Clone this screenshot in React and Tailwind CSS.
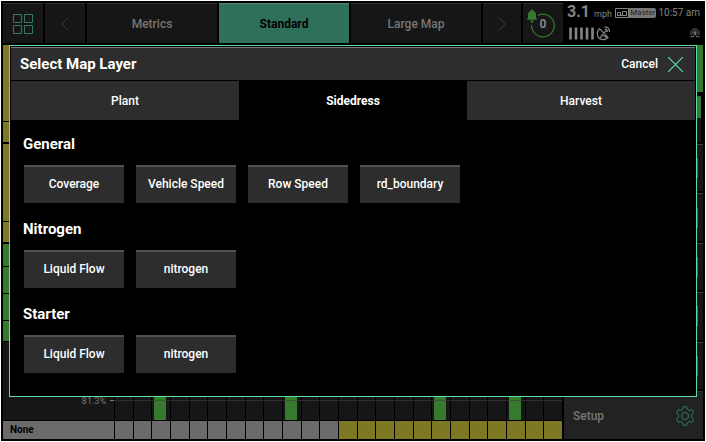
import React, { useState } from "react";

const layers = {
  Plant: [
    { title: "General", items: ["Coverage", "Vehicle Speed", "Row Speed"] },
  ],
  Sidedress: [
    {
      title: "General",
      items: ["Coverage", "Vehicle Speed", "Row Speed", "rd_boundary"],
    },
    { title: "Nitrogen", items: ["Liquid Flow", "nitrogen"] },
    { title: "Starter", items: ["Liquid Flow", "nitrogen"] },
  ],
  Harvest: [
    { title: "General", items: ["Coverage", "Vehicle Speed", "rd_boundary"] },
  ],
};

// Segments of the map edge, top to bottom
const segments = [
  { color: "bg-[#7d7824]", span: 76 },
  { color: "bg-[#7d7824]", span: 20, last: true },
  { color: "bg-[#7d7824]", span: 76 },
  { color: "bg-[#7d7824]", span: 20, last: true },
  { color: "bg-[#36792f]", span: 22 },
  { color: "bg-[#36792f]", span: 26 },
  { color: "bg-[#36792f]", span: 26 },
  { color: "bg-[#36792f]", span: 20, last: true },
];

const rows = Array.from({ length: 24 }, (_, i) => i);
const activeRows = [2, 9, 17, 21];

const navButton =
  "flex h-10 items-center justify-center border-t border-[#303030] bg-[#161616]";

const GridIcon = () => (
  <svg width="20" height="20" viewBox="0 0 20 20" fill="none" stroke="#2f7c62" aria-hidden="true">
    <path d="M.5.5h8v8h-8zM11.5.5h8v8h-8zM.5 11.5h8v8h-8zM11.5 11.5h8v8h-8z" />
  </svg>
);

const BellIcon = () => (
  <svg width="32" height="30" viewBox="0 0 32 30" aria-hidden="true">
    <path
      d="M11 6.4A11.3 11.3 0 1 1 4.7 16"
      fill="none"
      stroke="#36792f"
      strokeWidth="1.2"
    />
    <path
      d="M5 .5C5.8.5 6.3 1 6.3 1.8 8.3 2.4 9 4 9 6V8.6L10.3 10.8H0L1 8.6V6C1 4 1.7 2.4 3.7 1.8 3.7 1 4.2.5 5 .5ZM3.2 11.6H6.8C6.6 13 6 13.6 5 13.6S3.4 13 3.2 11.6Z"
      fill="#36792f"
    />
  </svg>
);

const SignalIcon = () => (
  <svg width="42" height="15" viewBox="0 0 42 15" fill="none" stroke="#858585" aria-hidden="true">
    <path d="M1.5 1.5v12M7 1.5v12M12.5 1.5v12M18 1.5v12M23.5 1.5v12" strokeWidth="2.6" />
    <path
      d="M30.5 2.7C27.4 5.6 27.6 10.3 30.4 12.4 33 14.4 36.8 14 39 11.5ZM34.6 7.2 37.2 4.6M31.2 12 33.2 8.6 38 11.8M35.5.9c3.2 0 5 1.8 5 5M35.7 3.2c1.8 0 2.7 1 2.7 2.8"
      strokeWidth="1.2"
    />
  </svg>
);

const ReceiverIcon = () => (
  <svg width="14" height="10" viewBox="0 0 14 10" fill="none" stroke="#858585" className="shrink-0" aria-hidden="true">
    <path d="M.5 .5h13v9H.5zM2.5 7V4.5h3V7M7.5 7V3.5h4V7M2 7.5h10" />
  </svg>
);

const SatelliteIcon = () => (
  <svg width="10" height="10" viewBox="0 0 10 10" fill="none" stroke="#777777" strokeWidth=".9" aria-hidden="true">
    <path d="M1.2 7C0 3.4 2.4.8 5 .8S10 3.4 8.8 7M3 6.2C2.2 4 3.4 2.8 5 2.8S7.8 4 7 6.2M2.2 9.4 5 6.2l2.8 3.2M.3 8.6h3.4M6.3 8.6h3.4" />
    <circle cx="5" cy="5" r="1" fill="#777777" />
  </svg>
);

const GearIcon = () => (
  <svg width="18" height="20" viewBox="0 0 18 20" fill="none" stroke="#2f7c62" strokeLinejoin="round" aria-hidden="true">
    <path d="M6.7 3.3 7.2.7h3.6l.5 2.6 2 1.2 2.6-.9 1.7 3.1-2 1.8v3l2 1.8-1.7 3.1-2.6-.9-2 1.2-.5 2.6H7.2l-.5-2.6-2-1.2-2.6.9-1.7-3.1 2-1.8v-3l-2-1.8 1.7-3.1 2.6.9z" />
    <circle cx="9" cy="10" r="3.6" />
  </svg>
);

const TopBar = () => {
  const [view, setView] = useState("Standard");

  return (
    <header className="flex gap-0.5">
      <button aria-label="Home" className={`${navButton} w-10`}>
        <GridIcon />
      </button>
      <button aria-label="Previous view" className={`${navButton} w-10`}>
        <svg width="8" height="14" viewBox="0 0 8 14" fill="none" stroke="#3c3c3c" aria-hidden="true">
          <path d="M7 .5.8 7 7 13.5" />
        </svg>
      </button>
      {["Metrics", "Standard", "Large Map"].map((name) => (
        <button
          key={name}
          onClick={() => setView(name)}
          className={
            name === view
              ? "h-10 flex-1 border-t border-[#4f8773] bg-[#2f705a] text-xs font-bold text-black"
              : "h-10 flex-1 border-t border-[#303030] bg-[#161616] text-xs font-medium text-[#777777]"
          }
        >
          {name}
        </button>
      ))}
      <button aria-label="Next view" className={`${navButton} w-[38px]`}>
        <svg width="8" height="14" viewBox="0 0 8 14" fill="none" stroke="#3c3c3c" aria-hidden="true">
          <path d="M1 .5 7.2 7 1 13.5" />
        </svg>
      </button>
      <button aria-label="Alerts" className={`${navButton} relative w-10`}>
        <BellIcon />
        <span className="absolute inset-0 flex items-center justify-center text-xs font-bold text-[#858585]">
          0
        </span>
      </button>
      <div className="flex w-[138px] flex-col justify-between pt-0.5 pr-[3px] pl-0.5 whitespace-nowrap text-[#858585]">
        <div className="flex h-4 items-center justify-between">
          <span className="flex items-baseline gap-1">
            <b className="text-base leading-4 font-bold">3.1</b>
            <span className="text-[9px] leading-4">mph</span>
          </span>
          <span className="flex items-center">
            <ReceiverIcon />
            <span className="rounded-r-xs bg-[#777777] px-px text-[8px] leading-[10px] text-[#222222]">
              Master
            </span>
            <time className="ml-0.5 text-[10px] leading-4">10:57 am</time>
          </span>
        </div>
        <div className="flex h-5 items-center justify-between pl-0.5">
          <SignalIcon />
          <SatelliteIcon />
        </div>
      </div>
    </header>
  );
};

const RowChart = () => (
  <section aria-label="Row chart">
    <div className="flex h-[78px]">
      <div className="flex w-[111px] items-end justify-end bg-[#161616] pb-[13px] text-[9px] leading-3 text-[#777777]">
        <span className="pr-1">81.3%</span>
        <span className="mb-1.5 h-px w-1 bg-[#777777]" />
      </div>
      <div className="relative grid flex-1 grid-cols-24 gap-x-px pl-px">
        {rows.map((i) => (
          <div key={i} className="bg-[#161616]">
            {activeRows.includes(i) && (
              <div className="ml-0.5 h-full w-3 bg-[#36792f]" />
            )}
          </div>
        ))}
        <div className="absolute inset-x-0 bottom-[19px] h-px bg-[#404040]/60" />
      </div>
    </div>
    <div className="mt-px flex h-[18px]">
      <div className="w-[111px] bg-[#6b6b6b] pl-[7px] text-[10px] leading-[18px] font-bold text-black">
        None
      </div>
      <div className="grid flex-1 grid-cols-24 gap-x-px pl-px">
        {rows.map((i) => (
          <div key={i} className={i < 12 ? "bg-[#6b6b6b]" : "bg-[#7d7824]"} />
        ))}
      </div>
    </div>
  </section>
);

const SidePanel = () => (
  <aside className="flex w-[139px] flex-col gap-0.5">
    <div className="h-[47px] bg-[#36792f]" />
    <div className="mt-0.5 mr-0.5 h-[46px] bg-[#161616]">
      <div className="h-[22px] border-t border-[#505050] bg-[#36792f]" />
    </div>
    {[0, 1, 2, 3, 4].map((i) => (
      <div key={i} className="flex flex-1 items-center border-t border-[#404040] bg-[#161616]">
        <div className="h-5 w-[134px] bg-[#36792f]" />
      </div>
    ))}
    <button className="flex h-12 items-center justify-between border-t border-[#303030] bg-[#222222] px-[9px] text-xs font-medium text-[#777777]">
      Setup
      <GearIcon />
    </button>
  </aside>
);

const SelectMapLayer = () => {
  const [tab, setTab] = useState("Sidedress");

  return (
    <div
      role="dialog"
      aria-labelledby="dialog-title"
      className="absolute inset-x-1.5 top-0 bottom-[42px] border border-[#5fd9ae] bg-black p-px text-white"
    >
      <div className="flex h-[33px] items-center justify-between border-t border-[#777777] bg-[#2d2d2d] pr-3 pl-[9px]">
        <h1 id="dialog-title" className="text-[15px] font-bold">
          Select Map Layer
        </h1>
        <button className="flex items-center gap-2.5 text-xs font-medium">
          Cancel
          <svg width="15" height="15" viewBox="0 0 15 15" stroke="#5fd9ae" strokeWidth="1.2" aria-hidden="true">
            <path d="M0 0 15 15M15 0 0 15" />
          </svg>
        </button>
      </div>
      <div role="tablist" className="mt-px grid grid-cols-3">
        {Object.keys(layers).map((name) => (
          <button
            key={name}
            role="tab"
            aria-selected={name === tab}
            onClick={() => setTab(name)}
            className={
              name === tab
                ? "h-[39px] bg-black text-xs font-bold"
                : "h-[39px] bg-[#2d2d2d] text-xs font-medium"
            }
          >
            {name}
          </button>
        ))}
      </div>
      <div className="px-3 pt-[13px]">
        {layers[tab].map((group) => (
          <section key={group.title} className="mb-[15px]">
            <h2 className="text-[15px] leading-[22px] font-bold">{group.title}</h2>
            <div className="mt-2.5 flex flex-wrap gap-3 pl-px">
              {group.items.map((item) => (
                <button
                  key={item}
                  className="h-[38px] w-[100px] border-t-2 border-[#505050] bg-[#2d2d2d] pb-0.5 text-xs font-medium"
                >
                  {item}
                </button>
              ))}
            </div>
          </section>
        ))}
      </div>
    </div>
  );
};

const App = () => {
  return (
    <div className="flex min-h-screen bg-white p-px font-['Roboto',sans-serif]">
      <div className="flex flex-1 flex-col gap-0.5 bg-black p-0.5">
        <TopBar />
        <main className="relative flex flex-1 gap-0.5">
          <div className="flex flex-1 flex-col">
            {/* map edge */}
            <div className="flex flex-1 flex-col gap-px">
              {segments.map((s, i) => (
                <div
                  key={i}
                  className={`${s.color} ${s.last ? "mb-px" : ""} w-2`}
                  style={{ flex: `${s.span} 1 0` }}
                />
              ))}
            </div>
            <RowChart />
          </div>
          <SidePanel />
          <SelectMapLayer />
        </main>
      </div>
    </div>
  );
};

export default App;
